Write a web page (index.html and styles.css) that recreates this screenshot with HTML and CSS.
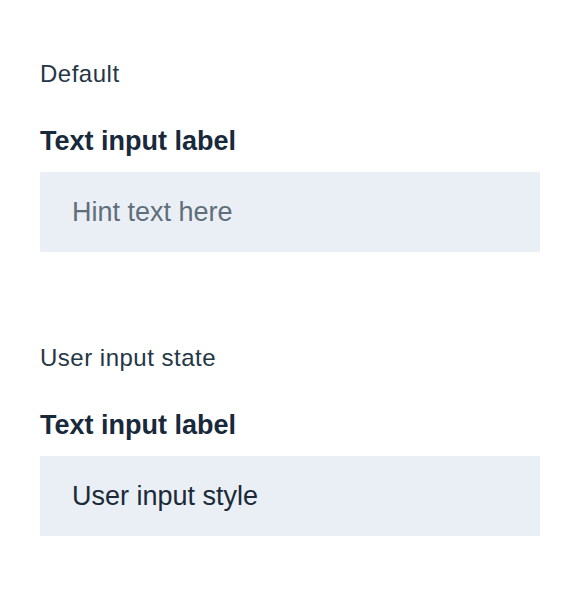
FILE: index.html
```html
<!DOCTYPE html>
<html lang="en">
<head>
    <meta charset="UTF-8">
    <meta name="viewport" content="width=device-width, initial-scale=1.0">
    <title>Text input</title>
    <link rel="stylesheet" href="styles.css">
</head>
<body>
    <div class="example">
        <p class="caption">Default</p>
        <label class="label" for="defaultInput">Text input label</label>
        <input type="text" id="defaultInput" class="text-input" placeholder="Hint text here">
    </div>

    <div class="example">
        <p class="caption">User input state</p>
        <label class="label" for="userInput">Text input label</label>
        <input type="text" id="userInput" class="text-input" value="User input style">
    </div>
</body>
</html>
```

FILE: styles.css
```css
body {
    font-family: "Liberation Sans", Arial, sans-serif;
    margin: 0;
    padding: 59px 40px 0;
    background-color: #ffffff;
    color: #1a2a38;
}
.example {
    display: flex;
    flex-direction: column;
}
.example + .example {
    margin-top: 91px;
}
.caption {
    margin: 0 0 36px;
    font-size: 24px;
    line-height: 30px;
    letter-spacing: 0.5px;
    color: #253645;
}
.label {
    font-size: 27px;
    font-weight: bold;
    line-height: 32px;
    margin-bottom: 15px;
    color: #17293a;
}
.text-input {
    box-sizing: border-box;
    width: 100%;
    height: 80px;
    margin: 0;
    padding: 0 32px;
    border: none;
    outline: none;
    background-color: #eaeff6;
    font-family: inherit;
    font-size: 27px;
    color: #1a2a38;
}
.text-input::placeholder {
    color: #5f6e7a;
    opacity: 1;
}
```
